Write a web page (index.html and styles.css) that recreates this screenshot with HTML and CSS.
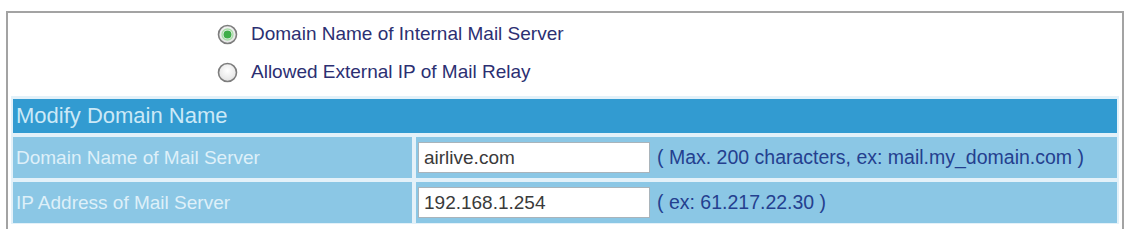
FILE: index.html
```html
<!DOCTYPE html>
<html>
<head>
<meta charset="utf-8">
<link rel="stylesheet" href="styles.css">
</head>
<body>
<div class="frame">
  <div class="radios">
    <label class="radio-row">
      <svg class="radio" width="21" height="21" viewBox="0 0 21 21">
        <defs>
          <radialGradient id="rg1" cx="50%" cy="40%" r="60%">
            <stop offset="0" stop-color="#ffffff"/>
            <stop offset="1" stop-color="#e2e2e2"/>
          </radialGradient>
        </defs>
        <circle cx="10.5" cy="10.5" r="9" fill="url(#rg1)" stroke="#7d7d7d" stroke-width="1.6"/>
        <circle cx="10.5" cy="10.5" r="4" fill="#3fae49"/>
        <circle cx="10.5" cy="10.5" r="5.5" fill="none" stroke="#a8dca8" stroke-width="1.4"/>
      </svg>
      <span class="radio-text">Domain Name of Internal Mail Server</span>
    </label>
    <label class="radio-row">
      <svg class="radio" width="21" height="21" viewBox="0 0 21 21">
        <defs>
          <radialGradient id="rg2" cx="50%" cy="40%" r="60%">
            <stop offset="0" stop-color="#ffffff"/>
            <stop offset="1" stop-color="#e2e2e2"/>
          </radialGradient>
        </defs>
        <circle cx="10.5" cy="10.5" r="9" fill="url(#rg2)" stroke="#7d7d7d" stroke-width="1.6"/>
      </svg>
      <span class="radio-text">Allowed External IP of Mail Relay</span>
    </label>
  </div>
  <div class="table">
    <div class="head">Modify Domain Name</div>
    <div class="label">Domain Name of Mail Server</div>
    <div class="value">
      <div class="input">airlive.com</div>
      <span class="hint">( Max. 200 characters, ex: mail.my_domain.com )</span>
    </div>
    <div class="label">IP Address of Mail Server</div>
    <div class="value">
      <div class="input">192.168.1.254</div>
      <span class="hint">( ex: 61.217.22.30 )</span>
    </div>
  </div>
</div>
</body>
</html>
```
FILE: styles.css
```css
html, body {
  margin: 0;
  padding: 0;
  background: #ffffff;
}
body {
  font-family: "Liberation Sans", Arial, sans-serif;
  height: 229px;
  overflow: hidden;
}
.frame {
  margin: 11px 2px 0 6px;
  border: 2px solid #a3a3a3;
  border-bottom: none;
  padding: 2px 3px 6px 3px;
}
.radios {
  display: flex;
  flex-direction: column;
  padding-left: 206px;
}
.radio-row {
  display: flex;
  align-items: center;
  height: 38px;
}
.radio {
  flex: none;
}
.radio-text {
  margin-left: 13px;
  font-size: 19px;
  color: #2c2f72;
}
.table {
  margin-top: 5px;
  display: grid;
  grid-template-columns: 399px 1fr;
  gap: 4px;
  padding: 3px 2px 1px 2px;
  background: #e3f1f9;
}
.head {
  grid-column: 1 / span 2;
  height: 34px;
  background: #329bd1;
  color: #cbe9f7;
  font-size: 22px;
  display: flex;
  align-items: center;
  padding-left: 3px;
}
.label {
  height: 41px;
  background: #8bc7e5;
  color: #def0f9;
  font-size: 19px;
  display: flex;
  align-items: center;
  padding-left: 3px;
}
.value {
  height: 41px;
  background: #8bc7e5;
  display: flex;
  align-items: center;
  padding-left: 2px;
}
.input {
  box-sizing: border-box;
  width: 232px;
  height: 31px;
  background: #ffffff;
  border: 1px solid #a9b4bb;
  font-size: 19px;
  color: #3a3a3a;
  display: flex;
  align-items: center;
  padding-left: 5px;
}
.hint {
  margin-left: 7px;
  font-size: 19.5px;
  color: #24408f;
}
```
